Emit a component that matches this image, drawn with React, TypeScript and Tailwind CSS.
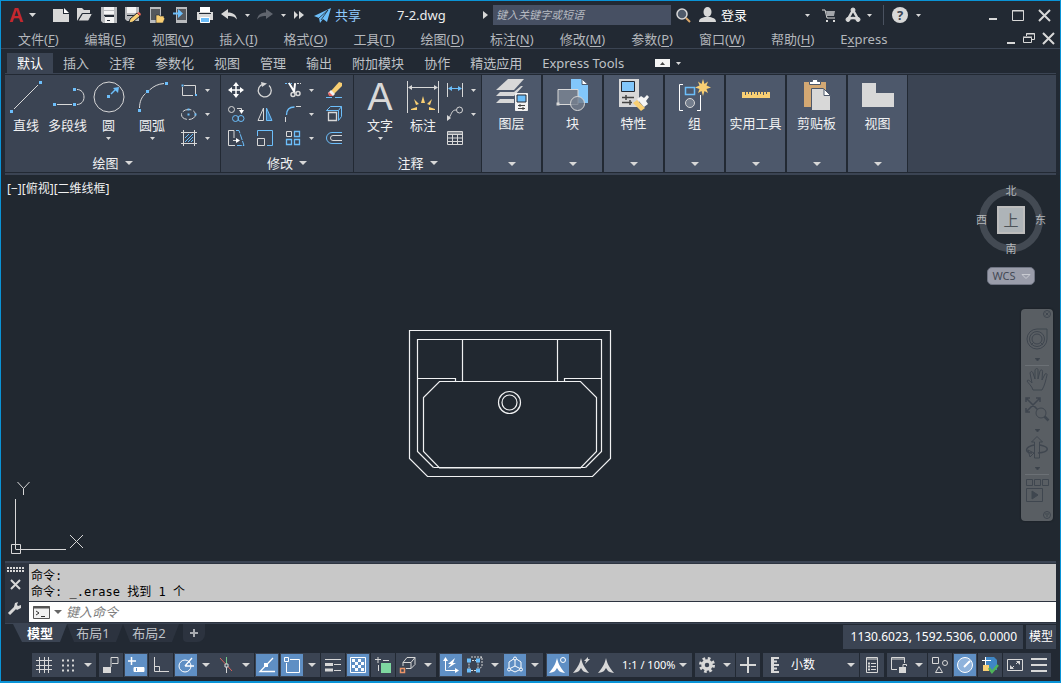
import type { ReactNode } from 'react';

const GRAY = '#d8d8d8';
const BLUE = '#6cbefa';
const GOLD = '#f9cf73';

type IconProps = { w?: number; h?: number; children: ReactNode };

// Thin line icon, crisp on the pixel grid
const Icon = ({ w = 16, h = 16, children }: IconProps) => (
  <svg width={w} height={h} viewBox={`0 0 ${w} ${h}`} fill="none" stroke={GRAY} className="block shrink-0 overflow-visible">
    {children}
  </svg>
);

const Dot = ({ x, y, s = 3, c = BLUE }: { x: number; y: number; s?: number; c?: string }) => (
  <rect x={x - s / 2} y={y - s / 2} width={s} height={s} fill={c} stroke="none" />
);

const Caret = ({ w = 5 }: { w?: number }) => (
  <svg width={w} height={Math.ceil(w / 2)} viewBox="0 0 8 4" preserveAspectRatio="none" className="block shrink-0 fill-[#d8d8d8]">
    <path d="M0 0h8L4 4z" />
  </svg>
);

// ---------- Title bar ----------

const quickAccess = [
  {
    name: '新建',
    icon: <Icon><path d="M0 2h10v5h6v8H0z" fill={GRAY} stroke="none" /><path d="M11 1l5 5h-5z" fill="#fff" stroke="none" /></Icon>,
  },
  {
    name: '打开',
    icon: (
      <Icon>
        <path d="M0 14V1h5l2 2h6v3H5z" fill={GRAY} stroke="none" />
        <path d="M5.500 6.500h10l-4 7.500H1z" fill={GRAY} stroke="#222933" />
      </Icon>
    ),
  },
  {
    name: '保存',
    icon: (
      <Icon>
        <path d="M0 0h16v16H2l-2-2z" fill="#b9bbbe" stroke="none" />
        <path d="M3 0h10v7H3zM4 10h9v6H4z" fill="#f4f4f4" stroke="none" />
        <path d="M3 3.500h10" stroke="#b9bbbe" />
        <path d="M3 8.500h10M4 9.500h9M6 13.500h3" stroke="#222933" />
      </Icon>
    ),
  },
  {
    name: '另存为',
    icon: (
      <Icon>
        <path d="M0 0h14v14H2l-2-2z" fill="#b9bbbe" stroke="none" />
        <path d="M2 0h9v6H2z" fill="#f4f4f4" stroke="none" />
        <path d="M2 8.500h9" stroke="#222933" />
        <path d="M4 16l1-4 7-6 3 3-7 6z" fill={GOLD} stroke="#222933" />
        <path d="M12 6l2-1 2 2-1 2z" fill="#f06a5a" stroke="none" />
      </Icon>
    ),
  },
  {
    name: '从移动设备打开',
    icon: (
      <Icon>
        <path d="M1 0h11v16H1z" fill="#b9bbbe" stroke="none" />
        <path d="M2 2h9v11H2z" fill="#55585d" stroke="none" />
        <path d="M7 16V8h3l1 1h4v2h1l-2 5z" fill={GOLD} stroke="#222933" strokeWidth=".6" />
      </Icon>
    ),
  },
  {
    name: '保存到移动设备',
    icon: (
      <Icon>
        <path d="M3 0h11v16H3z" fill="#b9bbbe" stroke="none" />
        <path d="M4 2h9v11H4z" fill="#55585d" stroke="none" />
        <path d="M0 6.500h7" stroke={BLUE} strokeWidth="2" />
        <path d="M5 2l5 4.500L5 11z" fill={BLUE} stroke="none" />
      </Icon>
    ),
  },
  {
    name: '打印',
    icon: (
      <Icon>
        <path d="M0 5h16v8H0z" fill={GRAY} stroke="none" />
        <path d="M3 0h10v5H3z" fill="#fff" stroke="none" />
        <path d="M2 6.500h12" stroke="#222933" />
        <path d="M3.500 10.500h9v5h-9z" fill={BLUE} stroke="#fff" />
      </Icon>
    ),
  },
];

const Undo = ({ c, flip }: { c: string; flip?: boolean }) => (
  <svg width="16" height="14" viewBox="0 0 16 14" fill={c} className={flip ? 'block -scale-x-100' : 'block'}>
    <path d="M0 6l7-5v3.500c5 0 8 2 9 7-2-2.500-4-3.500-9-3.500v3z" />
  </svg>
);

const TitleBar = () => (
  <div className="flex h-7 shrink-0 items-center pl-2 pr-2.5">
    <button aria-label="应用程序" className="flex w-10 items-center gap-1.5">
      <span className="font-['Liberation_Sans',sans-serif] text-xl leading-6 font-bold text-[#c4282e]">A</span>
      <Caret w={7} />
    </button>
    {quickAccess.map((q) => (
      <button key={q.name} aria-label={q.name} className="grid w-6 place-items-center">{q.icon}</button>
    ))}
    <button aria-label="放弃" className="grid w-6 place-items-center"><Undo c={GRAY} /></button>
    <button aria-label="放弃列表" className="grid w-3 place-items-center"><Caret /></button>
    <button aria-label="重做" className="grid w-6 place-items-center"><Undo c="#60656e" flip /></button>
    <button aria-label="重做列表" className="grid w-3 place-items-center"><Caret /></button>
    <button aria-label="更多" className="grid w-5 place-items-center">
      <Icon w={10} h={8}><path d="M0 0l4 4-4 4zM5 0l5 4-5 4z" fill={GRAY} stroke="none" /></Icon>
    </button>
    <button className="ml-[5px] flex items-center gap-1 text-[#8fcbff]">
      <Icon w={17}>
        <path d="M0 9L17 1l-4 14-4-3-3 4-1-5z" fill={BLUE} stroke="none" />
        <path d="M5 11l9-8-7 10" stroke="#222933" strokeWidth=".8" />
      </Icon>
      共享
    </button>
    <span className="ml-9 w-[86px] text-[13px] text-[#eceded]">7-2.dwg</span>
    <button aria-label="展开搜索" className="mr-[5px]">
      <Icon w={5} h={8}><path d="M0 0l5 4-5 4z" fill={GRAY} stroke="none" /></Icon>
    </button>
    <input
      aria-label="搜索"
      placeholder="键入关键字或短语"
      className="h-5 w-[178px] bg-[#475063] px-[3px] text-[11px] italic outline-none placeholder:text-[#b6bac1]"
    />
    <button aria-label="搜索" className="grid w-6 place-items-center">
      <Icon>
        <circle cx="7" cy="7" r="5" fill="#4f5a6a" strokeWidth="1.500" />
        <path d="M11 11l4 4" stroke="#dca86a" strokeWidth="2" />
      </Icon>
    </button>
    <button className="flex items-center gap-[5px] pl-1 text-white">
      <Icon w={17}>
        <ellipse cx="8.500" cy="5" rx="4" ry="5" fill={GRAY} stroke="none" />
        <path d="M0 15c0-4 3-4 6-5h5c3 1 6 1 6 5z" fill={GRAY} stroke="none" />
      </Icon>
      登录
    </button>
    <button aria-label="登录菜单" className="ml-auto mr-1 grid w-3 place-items-center"><Caret /></button>
    <button aria-label="商店" className="grid w-6 place-items-center">
      <Icon w={14} h={13}>
        <path d="M0 1h3l2 8h8" />
        <path d="M4 2h9l-1 5H5z" fill="#a3a6ab" stroke="none" />
        <Dot x={5} y={12} s={2} c={GRAY} />
        <Dot x={12} y={12} s={2} c={GRAY} />
      </Icon>
    </button>
    <button aria-label="应用" className="grid w-6 place-items-center">
      <Icon>
        <path d="M8 3L3 12M8 3l5 9M3 12q5-2 10 0" strokeWidth="2.500" />
        <circle cx="8" cy="3" r="2" fill={GRAY} />
        <circle cx="3" cy="12.500" r="2" fill={GRAY} />
        <circle cx="13" cy="12.500" r="2" fill={GRAY} />
      </Icon>
    </button>
    <button aria-label="应用菜单" className="grid w-2 place-items-center"><Caret /></button>
    <span className="mr-2 ml-2.5 h-5 w-px bg-[#4a5260]" />
    <button aria-label="帮助" className="grid size-4 place-items-center rounded-full bg-[#d8d8d8] text-[13px] leading-4 font-bold text-[#3b4453]">?</button>
    <button aria-label="帮助菜单" className="ml-1 grid w-3 place-items-center"><Caret /></button>
    <div className="ml-[61px] flex items-center gap-[15px] pl-1">
      <button aria-label="最小化"><Icon w={8} h={10}><path d="M0 9h8" strokeWidth="2" /></Icon></button>
      <button aria-label="最大化"><Icon w={12} h={11}><path d="M.500 .500h11v10H.500zM0 1h12" /></Icon></button>
      <button aria-label="关闭"><Icon w={11} h={11}><path d="M0 0l11 11M11 0L0 11" strokeWidth="2" /></Icon></button>
    </div>
  </div>
);

const menus = [
  ['文件', 'F'], ['编辑', 'E'], ['视图', 'V'], ['插入', 'I'], ['格式', 'O'], ['工具', 'T'],
  ['绘图', 'D'], ['标注', 'N'], ['修改', 'M'], ['参数', 'P'], ['窗口', 'W'], ['帮助', 'H'],
];

const MenuBar = () => (
  <nav className="flex h-5 shrink-0 items-center border-b border-[#3b4453] pl-1 pr-1.5 text-[#b4b7bc]">
    {menus.map(([name, key]) => (
      <button key={key} className="px-[13px] leading-4 whitespace-nowrap">{name}(<u className="underline-offset-2">{key}</u>)</button>
    ))}
    <button className="px-[13px] leading-4">E<u className="underline-offset-2">x</u>press</button>
    <div className="ml-auto flex items-center gap-2">
      <button aria-label="最小化文档"><Icon w={8} h={10}><path d="M0 9h8" strokeWidth="2" /></Icon></button>
      <button aria-label="还原文档">
        <Icon w={12} h={11}><path d="M3.500 3V.500h8v6H9M.500 4.500h8v5h-8zM0 4h9M3 1h9" /></Icon>
      </button>
      <button aria-label="关闭文档"><Icon w={11} h={11}><path d="M0 0l11 11M11 0L0 11" strokeWidth="2" /></Icon></button>
    </div>
  </nav>
);

const tabs = ['默认', '插入', '注释', '参数化', '视图', '管理', '输出', '附加模块', '协作', '精选应用', 'Express Tools'];

const RibbonTabs = () => (
  <div className="flex h-6 shrink-0 items-end pl-1.5 text-[#bfc2c7]">
    {tabs.map((t, i) => (
      <button key={t} className={i === 0 ? 'h-5 bg-[#3b4453] px-2.5 text-white' : 'h-5 px-2.5 whitespace-nowrap'}>{t}</button>
    ))}
    <button aria-label="最小化功能区" className="ml-5 flex h-5 items-center gap-1.5 pl-px">
      <Icon w={15} h={8}><path d="M0 0h15v8H0z" fill="#f4f4f4" stroke="none" /><path d="M5 6l2.500-3L10 6z" fill="#444" stroke="none" /></Icon>
      <Caret />
    </button>
  </div>
);

// ---------- Ribbon ----------

const BigButton = ({ label, icon, caret, width }: { label: string; icon: ReactNode; caret?: boolean; width: string }) => (
  <button className={`flex flex-col items-center pt-1.5 ${width}`}>
    <span className="grid h-8 place-items-center">{icon}</span>
    <span className="mt-0.5 leading-5 whitespace-nowrap">{label}</span>
    {caret && <span className="mt-0.5"><Caret /></span>}
  </button>
);

const PanelTitle = ({ children }: { children: ReactNode }) => (
  <button className="mt-auto flex h-[18px] w-full items-center justify-center gap-1.5 leading-4">
    {children}
    <Caret w={8} />
  </button>
);

const Small = ({ name, children }: { name: string; children: ReactNode }) => (
  <button aria-label={name} className="grid h-6 place-items-center">{children}</button>
);

const DrawPanel = () => (
  <section className="flex w-[216px] flex-col border-r border-[#222933]">
    <div className="flex">
      <BigButton
        label="直线" width="w-[42px]"
        icon={<Icon w={32} h={32}><path d="M4 28L28 4" /><Dot x={1.5} y={30.5} /><Dot x={30.5} y={1.5} /></Icon>}
      />
      <BigButton
        label="多段线" width="w-[41px]"
        icon={
          <Icon w={32} h={32}>
            <path d="M5 23.500h15M25 8.500c4 0 7 3 7 7.500s-3 7.500-7 7.500" />
            <Dot x={2.5} y={23.5} /><Dot x={22.5} y={23.5} /><Dot x={22.5} y={8.5} />
          </Icon>
        }
      />
      <BigButton
        label="圆" width="w-[41px]" caret
        icon={
          <Icon w={32} h={32}>
            <circle cx="16" cy="16" r="15" />
            <Dot x={15.5} y={15.5} />
            <path d="M18 13l5-5" stroke={BLUE} strokeWidth="1.500" />
            <path d="M20 7l6-1-1 6z" fill={BLUE} stroke="none" />
          </Icon>
        }
      />
      <BigButton
        label="圆弧" width="w-[46px]" caret
        icon={
          <Icon w={32} h={32}>
            <path d="M3.500 27c0-6 2-11 6-14.500M13.500 9C18 5 22 3 28 2.500" />
            <Dot x={3.5} y={29.5} /><Dot x={11.5} y={10.5} /><Dot x={30.5} y={2.5} />
          </Icon>
        }
      />
      <div className="grid grid-cols-[28px_8px] pt-[3px]">
        <Small name="矩形">
          <Icon><path d="M3 3.500h11.500V12M12 13.500H1.500V5" /><Dot x={1.5} y={3.5} s={2} /><Dot x={15} y={13} s={2} /></Icon>
        </Small>
        <Small name="矩形列表"><Caret /></Small>
        <Small name="椭圆">
          <Icon><ellipse cx="7.500" cy="8.500" rx="7" ry="5" strokeDasharray="9 2" /><Dot x={7.5} y={8.5} s={2} /><Dot x={7.5} y={3.5} s={2} /><Dot x={14.5} y={8.5} s={2} /></Icon>
        </Small>
        <Small name="椭圆列表"><Caret /></Small>
        <Small name="图案填充">
          <Icon>
            <path d="M0 2.500h16M0 13.500h16M2.500 0v16M13.500 0v16" />
            <path d="M4 8l4-4M4 12l8-8M7 12l5-5M10 12l2-2" stroke={BLUE} />
          </Icon>
        </Small>
        <Small name="填充列表"><Caret /></Small>
      </div>
    </div>
    <PanelTitle>绘图</PanelTitle>
  </section>
);

const ModifyPanel = () => (
  <section className="flex w-[133px] flex-col border-r border-[#222933]">
    <div className="grid grid-cols-[29px_29px_28px_8px_37px] pt-[3px]">
      <Small name="移动">
        <Icon>
          <path d="M8 2v12M2 8h12" strokeWidth="1.500" stroke="#fff" />
          <path d="M8 0l3 4H5zM8 16l3-4H5zM0 8l4-3v6zM16 8l-4-3v6z" fill="#fff" stroke="none" />
        </Icon>
      </Small>
      <Small name="旋转">
        <Icon><path d="M6 2.200A6.500 6.500 0 1 0 12 3.500" strokeWidth="1.300" /><path d="M4 0l6 1.500L5 5z" fill={GRAY} stroke="none" /></Icon>
      </Small>
      <Small name="修剪">
        <Icon>
          <path d="M0 1.500h7" stroke={BLUE} strokeDasharray="2 1" /><path d="M9 1.500h7" strokeDasharray="2 1" />
          <path d="M4 1l6 10M10 2L9 10" strokeWidth="2" stroke="#fff" />
          <circle cx="8" cy="12.500" r="2" strokeWidth="1.500" /><circle cx="13" cy="11.500" r="2" strokeWidth="1.500" />
        </Icon>
      </Small>
      <Small name="修剪列表"><Caret /></Small>
      <Small name="删除">
        <Icon>
          <path d="M5 9l8-9 3 1v3l-8 8z" fill={GOLD} stroke="none" />
          <path d="M5 8l4 4-2 2H4l-2-3z" fill="#f2f2f2" stroke="none" />
          <path d="M3 10l4 4H4c-2 0-2-3-1-4z" fill="#e9615e" stroke="none" />
          <path d="M0 15.500h6" stroke={BLUE} /><path d="M9 15.500h7" stroke={BLUE} />
        </Icon>
      </Small>

      <Small name="复制">
        <Icon>
          <circle cx="3.500" cy="3.500" r="3" /><path d="M9 2.500h4.500V5" /><path d="M11 4h5l-2.500 4z" fill="#fff" stroke="none" />
          <circle cx="7.500" cy="12.500" r="3" stroke={BLUE} /><circle cx="13" cy="12.500" r="3" stroke={BLUE} />
        </Icon>
      </Small>
      <Small name="镜像">
        <Icon><path d="M6.500 2v12.500H1z" /><path d="M9.500 2v12.500H15z" stroke={BLUE} fill="#3f79ad" /></Icon>
      </Small>
      <Small name="圆角">
        <Icon><path d="M1.500 9c0-5 3-8 8-8" stroke={BLUE} strokeWidth="1.300" /><path d="M11 .500h5M.500 11v5" /></Icon>
      </Small>
      <Small name="圆角列表"><Caret /></Small>
      <Small name="分解">
        <Icon>
          <path d="M2.500 6.500h8v8h-8z" strokeWidth="1.300" />
          <path d="M.500 4.500l4-4h11v10l-3 4M.500 4.500h12v10M12.500 4.500l3-4" stroke={BLUE} />
        </Icon>
      </Small>

      <Small name="拉伸">
        <Icon>
          <path d="M7 15.500H.500V.500H6V8" /><path d="M5 10.500h5" /><path d="M8 8l4 2.500L8 13z" fill="#fff" stroke="none" />
          <path d="M8 .500h3l5 15H9" stroke={BLUE} strokeDasharray="6 1" />
        </Icon>
      </Small>
      <Small name="缩放">
        <Icon><path d="M.500 6V.500h15v15H10" stroke={BLUE} /><path d="M.500 8.500h7v7h-7z" /></Icon>
      </Small>
      <Small name="阵列">
        <Icon>
          <path d="M1.500 1.500h5v5h-5z" /><path d="M9.500 1.500h5v5h-5zM1.500 9.500h5v5h-5zM9.500 9.500h5v5h-5z" stroke={BLUE} strokeWidth="1.300" />
        </Icon>
      </Small>
      <Small name="阵列列表"><Caret /></Small>
      <Small name="偏移">
        <Icon><path d="M16 2.500H6a5.500 5.500 0 0 0 0 11h10" stroke={BLUE} /><path d="M16 5.500H7a2.500 2.500 0 0 0 0 5h9" /></Icon>
      </Small>
    </div>
    <PanelTitle>修改</PanelTitle>
  </section>
);

const AnnotatePanel = () => (
  <section className="flex w-[127px] flex-col">
    <div className="flex pl-[3px]">
      <BigButton
        label="文字" width="w-[46px]" caret
        icon={<span className="font-['Liberation_Sans',sans-serif] text-[38px] leading-8 text-[#d8d8d8]">A</span>}
      />
      <BigButton
        label="标注" width="w-10"
        icon={
          <Icon w={32} h={32}>
            <path d="M.500 0v32M31.500 0v32" /><path d="M3 6.500h26" />
            <path d="M1 6.500L5 4v5zM31 6.500L27 4v5z" fill={GRAY} stroke="none" />
            <path d="M16 15l2 7h-4zM7 18l5 5-3 1zM25 18l-5 5 3 1zM4 28l6-2v3H4zM28 28l-6-2v3h6z" fill={GOLD} stroke="none" />
          </Icon>
        }
      />
      <div className="grid grid-cols-[24px_12px] pt-[3px]">
        <Small name="线性">
          <Icon><path d="M.500 1v14M15.500 1v14" /><path d="M3 6.500h10" stroke={BLUE} /><path d="M1 6.500L5 4v5zM15 6.500L11 4v5z" fill={BLUE} stroke="none" /></Icon>
        </Small>
        <Small name="标注列表"><Caret /></Small>
        <Small name="引线">
          <Icon><circle cx="12.500" cy="4" r="3" /><path d="M9 4C5 4 5 7 2 12" /><path d="M0 15V9l4 3z" fill={GRAY} stroke="none" /></Icon>
        </Small>
        <Small name="引线列表"><Caret /></Small>
        <Small name="表格">
          <Icon><path d="M.500 1.500h15v13H.500zM0 4.500h16M0 3h16M0 8h16M0 11.500h16M5.500 4v10M10.500 4v10" /></Icon>
        </Small>
      </div>
    </div>
    <PanelTitle>注释</PanelTitle>
  </section>
);

const collapsed = [
  {
    label: '图层',
    icon: (
      <Icon w={32} h={32}>
        <path d="M12 0h16L18 11H0z" fill={GRAY} stroke="none" />
        <path d="M0 17l4-4h14l7-6h2l-9 10zM0 24l4-4h14v4z" fill={GRAY} stroke="none" />
        <path d="M19.500 14.500h12v17h-12z" fill="#f2f2f2" stroke="#f2f2f2" />
        <path d="M21 16h9v7h-9z" fill={BLUE} stroke="#222933" />
        <path d="M22 26.500h7M22 29.500h7M24 25v3M27 28v3" stroke="#444" />
      </Icon>
    ),
  },
  {
    label: '块',
    icon: (
      <Icon w={32} h={32}>
        <path d="M14 0h10l7 6v18H14z" fill="#82c7fb" stroke="none" />
        <path d="M25 0l6 5.500h-6z" fill="#fff" stroke="#4d586b" />
        <path d="M1 10.500h20v15H1z" fill="#737d8c" />
        <circle cx="20.500" cy="24.500" r="7" fill="#737d8c" fillOpacity=".8" />
        <Dot x={1} y={25} c={GRAY} />
      </Icon>
    ),
  },
  {
    label: '特性',
    icon: (
      <Icon w={32} h={32}>
        <path d="M1 0h20v28H1z" fill={GRAY} stroke="none" />
        <path d="M3.500 2.500h13v10h-13z" fill="#82c7fb" stroke="#222933" />
        <path d="M4 18.500h12M4 23.500h10M8 16v5M12 21v5" stroke="#444" strokeWidth="1.500" />
        <path d="M15 24l4-3 8 8-4 3z" fill={GOLD} stroke="none" />
        <path d="M19 20l3-2 1-1 3 2 3-3 2 2-3 4 2 3-4 3z" fill="#f5f5f5" stroke="none" />
      </Icon>
    ),
  },
  {
    label: '组',
    icon: (
      <Icon w={32} h={32}>
        <path d="M4 5.500H.500v26H4M18 31.500h3.500V16" stroke="#fff" />
        <path d="M6.500 8.500h9v7h-9z" stroke={BLUE} strokeWidth="1.500" />
        <circle cx="11" cy="24" r="4.500" fill="#737d8c" />
        <path d="M24 0l1.500 5L29 2.500 27.500 6.500 32 8.500l-4.500 1.500L29 14l-3.500-2L24 17l-1.500-5L19 14l1.500-4L16 8.500l4.500-2L19 2.500 22.500 5z" fill={GOLD} stroke="none" />
      </Icon>
    ),
  },
  {
    label: '实用工具',
    icon: (
      <Icon w={32} h={32}>
        <path d="M2 13h28v6H2z" fill={GOLD} stroke="none" />
        <path d="M5.500 13v3M8.500 13v2M11.500 13v3M14.500 13v2M17.500 13v3M20.500 13v2M23.500 13v3M26.500 13v2" stroke="#4d586b" />
      </Icon>
    ),
  },
  {
    label: '剪贴板',
    icon: (
      <Icon w={32} h={32}>
        <path d="M3 3h22v25H3z" fill="#d3a873" stroke="none" />
        <path d="M8.500 2.500h3v-2h5v2h3v3h-11z" fill="#fff" stroke="#4d586b" />
        <path d="M10.500 9.500h12l7 7v15h-19z" fill={GRAY} stroke="#4d586b" />
        <path d="M23 10l6.500 6.500H23z" fill="#fff" stroke="#4d586b" />
      </Icon>
    ),
  },
  { label: '视图', icon: <Icon w={32} h={32}><path d="M0 4h14v10h18v14H0z" fill={GRAY} stroke="none" /></Icon> },
];

const Ribbon = () => (
  <div className="mx-1 h-[102px] shrink-0 bg-[#3b4453] pt-px text-[#f0f1f2]">
    <div className="flex h-[99px] border-y border-[#222933]">
      <DrawPanel />
      <ModifyPanel />
      <AnnotatePanel />
      {collapsed.map((p) => (
        <button key={p.label} className="flex w-[61px] flex-col items-center border-x border-[#222933] bg-[#4d586b] pt-1 pb-1.5">
          {p.icon}
          <span className="mt-0.5 leading-5 whitespace-nowrap">{p.label}</span>
          <span className="mt-auto"><Caret w={8} /></span>
        </button>
      ))}
    </div>
  </div>
);

// ---------- Drawing area ----------

const Sink = () => (
  <svg width="220" height="165" viewBox="0 0 220 165" fill="none" stroke="#f0f1f2" strokeWidth="1.200" className="absolute top-[145px] left-[399px]">
    <path d="M9.500 10.500h201v128l-18 18H27.500l-18-18z" />
    <path d="M33.500 147.500l-16-16v-112h184v112l-16 16" />
    <path d="M39.500 61.500h141l16 16v54l-16 16.500h-141l-16-16.500v-54z" />
    <path d="M33.500 147.500h152M62.500 19.500v42M157.500 19.500v42M17.500 58.500h38v3M164.500 61.500v-3h37" />
    <circle cx="109.500" cy="82.500" r="11" />
    <circle cx="109.500" cy="82.500" r="7.500" />
  </svg>
);

const ViewCube = () => (
  <div className="absolute top-2 right-3 flex w-[74px] flex-col items-center text-[11px] leading-4 text-[#b5b8bb]">
    <div className="relative grid size-[74px] place-items-center">
      <div className="absolute inset-[5px] rounded-full border-[7px] border-[#434a53]" />
      <button aria-label="俯视" className="grid size-7 place-items-center border-2 border-[#bdbdbd] bg-[#aeb4b8] text-[15px] leading-5 text-[#4d5358]">上</button>
      <span className="absolute top-0">北</span>
      <span className="absolute bottom-0">南</span>
      <span className="absolute left-0.5">西</span>
      <span className="absolute right-0.5">东</span>
    </div>
    <button className="mt-2.5 flex h-[18px] w-12 items-center justify-center gap-1.5 rounded-[5px] border border-[#6f7482] bg-[#9a9daa] text-[11px] leading-4 text-[#444955]">
      WCS
      <Icon w={8} h={5}><path d="M0 .500h8L4 4.500z" stroke="#c9cbd2" /></Icon>
    </button>
  </div>
);

const NavCaret = () => (
  <svg width="5" height="3" viewBox="0 0 5 3" className="mt-2 mb-1 block fill-[#3a4048]"><path d="M0 0h5L2.500 3z" /></svg>
);

const NavBar = () => (
  <div className="absolute top-[134px] right-[7px] flex h-[212px] w-8 flex-col items-center rounded bg-[#595e63] shadow-[0_0_2px_#14181d] [&_svg]:stroke-[#3f464f]">
    <button aria-label="关闭导航栏" className="mt-px mr-0.5 self-end"><Icon w={8} h={8}><circle cx="4" cy="4" r="3.500" /><path d="M2.500 2.500l3 3M5.500 2.500l-3 3" /></Icon></button>
    <button aria-label="控制盘" className="mt-2.5">
      <Icon w={22} h={22}><path d="M11 1h10v10a10 10 0 1 1-10-10z" /><circle cx="11" cy="11" r="7.500" /><circle cx="11" cy="11" r="5" /><path d="M5 17l3-3M17 17l-3-3" /></Icon>
    </button>
    <NavCaret />
    <span className="h-px w-6 bg-[#6b7075]" />
    <button aria-label="平移" className="mt-0.5">
      <Icon w={22} h={23}>
        <path d="M7 22c-1-4-5-7-6-9 1-2 3 0 5 2L4 5c1-2 2-2 3 0l2 6V2c1-2 3-2 3 0v9l2-8c1-2 3-1 2.500 1L16 12l3-6c1-1 2.500 0 2 1-1 4-2 10-5 15z" />
      </Icon>
    </button>
    <button aria-label="范围缩放" className="mt-1.5">
      <Icon w={24} h={24}>
        <path d="M1 1l14 14M15 1L1 15M1 5V1h4M11 1h4v4M1 11v4h4" strokeWidth="1.500" /><circle cx="16" cy="16" r="5" fill="#595e63" /><path d="M19.500 19.500l4 4" strokeWidth="2.500" />
      </Icon>
    </button>
    <NavCaret />
    <button aria-label="动态观察">
      <Icon w={22} h={23}>
        <path d="M8.500 22V6h-3L11 .500 16.500 6h-3v16z" /><path d="M8 9C-2 11-1 17 6 17M14 9c10 2 10 7-2 8" strokeWidth="1.500" /><path d="M2 14l6 3-4 4z" />
      </Icon>
    </button>
    <NavCaret />
    <span className="h-px w-6 bg-[#6b7075]" />
    <button aria-label="运动" className="mt-1">
      <Icon w={22} h={23}><path d="M.500 .500h6v6h-6zM8.500 .500h6v6h-6zM16.500 .500h6v6h-6zM.500 9.500h16v13H.500z" /><path d="M6 12l6 4-6 4z" fill="#3f464f" /></Icon>
    </button>
    <button aria-label="导航栏选项" className="mt-auto mr-0.5 mb-0.5 self-end"><Icon w={8} h={8}><circle cx="4" cy="4" r="3.500" /><path d="M2 3h4M3 5h2" /></Icon></button>
  </div>
);

const Canvas = () => (
  <main className="relative min-h-0 flex-1 overflow-hidden bg-[#212830]">
    <div className="flex pt-1.5 pl-1.5 text-[12px] leading-4 text-[#f0f1f2]">
      <button>[−]</button>
      <button>[俯视]</button>
      <button>[二维线框]</button>
    </div>
    <Sink />
    <ViewCube />
    <NavBar />
    <svg width="80" height="76" viewBox="0 0 80 76" fill="none" stroke={GRAY} className="absolute bottom-1.5 left-[9px]">
      <path d="M7.500 3l6 6.500L19.500 3M13.500 9.500v6.500M60 56l13 13M73 56L60 69" />
      <path d="M5.500 20v50M5.500 70.500H56M1.500 65.500h9v9h-9z" />
    </svg>
  </main>
);

// ---------- Command line ----------

const CommandLine = () => (
  <div className="mx-1 flex h-[62px] shrink-0 border-t-2 border-[#3b4453] bg-[#2d3440]">
    <div className="flex w-6 shrink-0 flex-col items-center pt-1 pr-1">
      <Icon w={17} h={5}><path d="M0 1h17M0 4h17" strokeWidth="2" strokeDasharray="2 1" /></Icon>
      <button aria-label="关闭命令行" className="mt-2"><Icon w={9} h={9}><path d="M0 0l9 9M9 0L0 9" strokeWidth="2" /></Icon></button>
      <button aria-label="自定义" className="mt-3">
        <Icon w={14} h={14}><path d="M1 13l7-7" strokeWidth="3" /><path d="M13 4l-3 1-1-1 1-3-3 1-1 4 3 3 4-2z" fill={GRAY} stroke="none" /></Icon>
      </button>
    </div>
    <div className="flex min-w-0 flex-1 flex-col pt-px">
      <div className="h-[37px] bg-[#c8c8c8] pt-1 pl-0.5 font-['DejaVu_Sans_Mono','Noto_Sans_CJK_SC',monospace] text-[12px] leading-4 text-black">
        <p className="h-4">命令:</p>
        <p className="h-4 whitespace-pre">命令: _.erase 找到 1 个</p>
      </div>
      <div className="mt-px flex h-5 items-center bg-white pl-1">
        <button aria-label="最近使用的命令" className="flex items-center gap-1">
          <Icon w={17} h={13}>
            <path d="M.500 .500h16v12H.500z" fill="#f1f1f1" stroke="#555" /><path d="M0 1.500h17" stroke="#555" strokeWidth="2" />
            <path d="M3 5l3 2-3 2M8 10.500h4" stroke="#333" />
          </Icon>
          <svg width="8" height="4" viewBox="0 0 8 4" className="fill-[#666]"><path d="M0 0h8L4 4z" /></svg>
        </button>
        <input aria-label="命令" placeholder="键入命令" className="ml-1 h-5 min-w-0 flex-1 italic outline-none placeholder:text-[#7d7d7d]" />
      </div>
    </div>
  </div>
);

// ---------- Layout tabs and status bar ----------

const LayoutTabs = () => (
  <div className="flex h-[18px] pl-2 leading-4">
    <button className="w-[54px] bg-[#3b4453] font-bold text-white [clip-path:polygon(0_0,100%_0,calc(100%-7px)_100%,9px_100%)]">模型</button>
    <button className="w-14 bg-[#2c333f] pr-1 text-[#bfc2c7] [clip-path:polygon(0_0,100%_0,calc(100%-7px)_100%,7px_100%)]">布局1</button>
    <button className="w-14 bg-[#2c333f] pr-1 text-[#bfc2c7] [clip-path:polygon(0_0,100%_0,calc(100%-7px)_100%,7px_100%)]">布局2</button>
    <button aria-label="新建布局" className="ml-1 grid w-[22px] place-items-center rounded-br-lg rounded-bl bg-[#2c333f]">
      <Icon w={8} h={8}><path d="M4 0v8M0 4h8" strokeWidth="2" stroke="#a9acb1" /></Icon>
    </button>
  </div>
);

const Toggle = ({ name, on, children }: { name: string; on?: boolean; children: ReactNode }) => (
  <button
    aria-label={name}
    aria-pressed={!!on}
    className={on ? 'grid h-6 w-6 place-items-center border border-[#3b4453] bg-[#5f8fc4]' : 'grid h-6 w-6 place-items-center'}
  >
    {children}
  </button>
);

const Drop = ({ name }: { name: string }) => (
  <button aria-label={name} className="grid h-6 w-4 place-items-center"><Caret w={8} /></button>
);

const Block = ({ children }: { children: ReactNode }) => <div className="flex bg-[#3b4453]">{children}</div>;
const Group = ({ children }: { children: ReactNode }) => <div className="flex gap-px">{children}</div>;

const star = 'M8 0c1 4 2 8 8 15-4-1-5-1-6-2l-2-3-2 3c-1 1-2 1-6 2C6 8 7 4 8 0z';

const StatusBar = () => (
  <div className="flex h-6 items-center gap-[3px] pl-[31px] text-[11px] text-white">
    <Group>
      <Block>
        <Toggle name="栅格"><Icon><path d="M0 3.500h16M0 8.500h16M0 12.500h16M3.500 0v16M8.500 0v16M12.500 0v16" /></Icon></Toggle>
        <Toggle name="捕捉"><Icon w={13} h={13}><path d="M0 1.500h13M0 6.500h13M0 11.500h13" strokeWidth="2" strokeDasharray="2 3" /></Icon></Toggle>
        <Drop name="捕捉设置" />
      </Block>
    </Group>
    <Group>
      <Block><Toggle name="推断约束"><Icon><path d="M8 10V.500h7v6H9" /><path d="M0 10h8v6H0z" fill={GRAY} stroke="none" /></Icon></Toggle></Block>
      <Block><Toggle name="动态输入" on><Icon><path d="M3.500 0v8M0 4h8" stroke="#fff" strokeWidth="1.500" /><path d="M6 10.500h10v4H6z" fill="#fff" stroke="#fff" /><path d="M8.500 11v3" stroke="#5f8fc4" /></Icon></Toggle></Block>
      <Block><Toggle name="正交"><Icon><path d="M1.500 0v14.500H16M1.500 9.500h5v5" /></Icon></Toggle></Block>
      <Block>
        <Toggle name="极轴追踪" on><Icon><circle cx="7" cy="9" r="6" stroke="#fff" /><path d="M7 9l7-8M7 9h9" stroke="#fff" strokeWidth="1.300" /></Icon></Toggle>
        <Drop name="极轴设置" />
        <Toggle name="等轴测草图"><Icon><path d="M2 1l12 13" stroke="#d9645c" /><path d="M8.500 0v7" stroke="#74c98c" /><path d="M8.500 10v6" /><path d="M7 7h3v3H7z" fill="#3b4453" /></Icon></Toggle>
        <Drop name="等轴测设置" />
      </Block>
      <Block><Toggle name="对象捕捉追踪" on><Icon><path d="M14 1L1 14.500h15" stroke="#fff" strokeWidth="1.300" /><Dot x={7} y={8} c="#fff" s={4} /></Icon></Toggle></Block>
      <Block>
        <Toggle name="对象捕捉" on><Icon><path d="M6 2.500h9.500v13h-13V6M.500 .500h4v4h-4z" stroke="#fff" /></Icon></Toggle>
        <Drop name="对象捕捉设置" />
      </Block>
      <Block><Toggle name="线宽"><Icon><path d="M0 2.500h16M0 12.500h7M9 13.500h7M9 7.500h7" /><path d="M0 7.500h8M0 13h8" strokeWidth="3" /></Icon></Toggle></Block>
      <Block>
        <Toggle name="透明度" on>
          <Icon>
            <path d="M.500 .500h15v15H.500z" stroke="#fff" />
            <path d="M2 3.500h12M2 9.500h12" stroke="#fff" strokeWidth="3" strokeDasharray="3 3" />
            <path d="M5 6.500h9M5 12.500h9" stroke="#fff" strokeWidth="3" strokeDasharray="3 3" />
          </Icon>
        </Toggle>
      </Block>
      <Block><Toggle name="选择循环"><Icon><path d="M3 0v6M0 2.500h6M8 3.500h6M3.500 8v6" /><path d="M6 6h10v10H6z" fill="#7fd8a0" stroke="none" /></Icon></Toggle></Block>
      <Block>
        <Toggle name="三维对象捕捉"><Icon><path d="M3 9V5.500h8v6H6M3 5.500L7 .500h8v7l-4 4M11 5.500l4-5" /><path d="M.500 11.500h4v4h-4z" stroke="#eb9468" strokeWidth="1.500" /></Icon></Toggle>
        <Drop name="三维对象捕捉设置" />
      </Block>
    </Group>
    <Group>
      <Block>
        <Toggle name="动态 UCS" on><Icon><path d="M2.500 3v10.500H13" stroke="#fff" /><path d="M2.500 0L5 4H0zM16 13.500L12 11v5zM12 1L5 7h3l-3 4 8-5h-3z" fill="#fff" stroke="none" /></Icon></Toggle>
        <Toggle name="选择过滤"><Icon><path d="M2 3.500h9v10H2zM4 0h11v9l-3 4M11 3l4-3" strokeDasharray="2 1" /><Dot x={2} y={3.5} s={4} /><Dot x={11} y={3.5} s={4} /><Dot x={2} y={13.5} s={4} /><Dot x={11} y={13.5} s={4} /></Icon></Toggle>
        <Drop name="选择过滤设置" />
        <Toggle name="小控件" on>
          <Icon>
            <path d="M8 1l6 4v7l-6 3-6-3V5zM8 1v8M8 9l-6 3M8 9l6 3" stroke="#fff" />
            <circle cx="8" cy="1.500" r="1.500" fill="#5f8fc4" stroke="#fff" /><circle cx="2" cy="12.500" r="1.500" fill="#5f8fc4" stroke="#fff" /><circle cx="14" cy="12.500" r="1.500" fill="#5f8fc4" stroke="#fff" />
          </Icon>
        </Toggle>
        <Drop name="小控件设置" />
      </Block>
    </Group>
    <Group>
      <Block>
        <Toggle name="注释可见性" on><Icon><path d={star} fill="#fff" stroke="none" transform="translate(-1 1)" /><circle cx="13" cy="3" r="2.500" stroke="#fff" /></Icon></Toggle>
        <Toggle name="自动缩放"><Icon><path d={star} fill={GRAY} stroke="none" transform="translate(-1 1)" /><path d="M14 0l-4 4h2l-1 3 5-5h-2z" fill={GRAY} stroke="none" /></Icon></Toggle>
        <Toggle name="注释比例"><Icon w={14} h={16}><path d={star} fill={GRAY} stroke="none" transform="translate(-1 1)" /></Icon></Toggle>
        <button className="flex h-6 w-[74px] items-center gap-1 pl-1 whitespace-nowrap">1:1 / 100% <Caret w={8} /></button>
      </Block>
    </Group>
    <Group>
      <Block>
        <Toggle name="切换工作空间"><Icon><circle cx="8" cy="8" r="4" strokeWidth="3.500" /><circle cx="8" cy="8" r="6.500" strokeWidth="3" strokeDasharray="2.600 2.505" /></Icon></Toggle>
        <Drop name="工作空间列表" />
      </Block>
      <Block><Toggle name="注释监视器"><Icon><path d="M8 0v16M0 8h16" strokeWidth="2" /></Icon></Toggle></Block>
    </Group>
    <Group>
      <Block>
        <label className="flex h-6 w-24 items-center pr-1">
          <span className="grid w-6 place-items-center"><Icon w={8} h={16}><path d="M0 0h3v16H0z" fill={GRAY} stroke="none" /><path d="M3 1h5M3 4.500h3M3 8h5M3 11.500h3M3 15h5" strokeWidth="2" /></Icon></span>
          <select aria-label="单位" className="ml-1 min-w-0 flex-1 appearance-none bg-transparent text-[12px] leading-4 outline-none"><option>小数</option></select>
          <Caret w={8} />
        </label>
      </Block>
      <Block><Toggle name="快捷特性"><Icon w={12} h={16}><path d="M.500 .500h11v15H.500zM0 2h12M5 6.500h5M5 9.500h5M5 12.500h5" /><path d="M2 6.500h2M2 9.500h2M2 12.500h2" strokeWidth="2" /></Icon></Toggle></Block>
    </Group>
    <Group>
      <Block>
        <Toggle name="锁定用户界面"><Icon><path d="M6 12.500H.500V.500h13V6M0 2h14" /><path d="M8 10h7v6H8z" fill={GRAY} stroke="none" /><path d="M12 10V7.500h3.500V9" /></Icon></Toggle>
        <Drop name="锁定列表" />
      </Block>
      <Block><Toggle name="隔离对象"><Icon><path d="M.500 .500h6v6h-6zM7 9.500l3.500 6h-7z" /><circle cx="13" cy="6" r="2.500" /></Icon></Toggle></Block>
      <Block><Toggle name="图形性能" on><Icon><circle cx="8" cy="8" r="7.500" fill="#8fb3dc" stroke="#fff" /><path d="M7 10l6-6" stroke="#fff" strokeWidth="2" /></Icon></Toggle></Block>
      <Block>
        <Toggle name="图形文件状态"><Icon><path d="M3 0h9l3 3v10H3z" fill="#3f86c5" stroke="none" /><path d="M0 3.500h9M3.500 0v8" stroke="#fff" /><path d="M1 8h6v6H1z" fill={GOLD} stroke="none" /><path d="M7 11l3 4 6-7" stroke="#4eb35a" strokeWidth="2.500" /></Icon></Toggle>
      </Block>
      <Block>
        <Toggle name="全屏显示"><Icon><path d="M.500 2.500h15v11H.500zM9 7l3-3M4 12l3-3" /><path d="M13 4v4L9 4zM3 12V8l4 4z" fill={GRAY} stroke="none" /></Icon></Toggle>
        <Toggle name="自定义"><Icon><path d="M0 2h16M0 8h16M0 14h16" strokeWidth="2" /></Icon></Toggle>
      </Block>
    </Group>
  </div>
);

export default function App() {
  return (
    <div className="flex h-screen flex-col overflow-hidden border border-b-2 border-[#0a93d6] bg-[#222933] font-['Noto_Sans','Noto_Sans_CJK_SC',sans-serif] text-[13px] leading-5">
      <TitleBar />
      <MenuBar />
      <RibbonTabs />
      <Ribbon />
      <Canvas />
      <CommandLine />
      <footer className="shrink-0 pb-1">
        <div className="mx-1 flex h-[30px] justify-between border-t border-[#3b4453]">
          <LayoutTabs />
          <div className="flex gap-[3px] pt-px text-[12px] leading-6 text-white">
            <button className="h-6 w-[180px] bg-[#3b4453] pr-1.5 text-right">1130.6023, 1592.5306, 0.0000</button>
            <button className="h-6 w-[30px] bg-[#3b4453]">模型</button>
          </div>
        </div>
        <StatusBar />
      </footer>
    </div>
  );
}
